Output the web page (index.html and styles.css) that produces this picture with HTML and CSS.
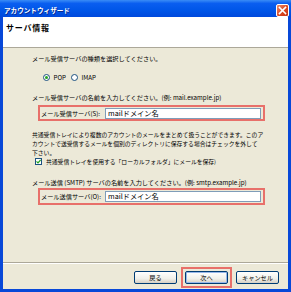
FILE: index.html
```html
<!DOCTYPE html>
<html>
<head>
    <title>アカウントウィザード</title>
    <link rel="stylesheet" href="styles.css">
</head>
<body>

<div class="window">
    <div class="titlebar">
        <span class="title">アカウントウィザード</span>
        <span class="close-btn">
            <svg width="9" height="9" viewBox="0 0 9 9">
                <path d="M1.5 1.5 L7.5 7.5 M7.5 1.5 L1.5 7.5" stroke="#fff" stroke-width="1.6" stroke-linecap="square"/>
            </svg>
        </span>
    </div>

    <div class="client">
        <!-- Page header -->
        <div class="header">サーバ情報</div>

        <div class="content">
            <div class="question first">メール受信サーバの種類を選択してください。</div>

            <div class="radios">
                <label class="opt"><span class="radio checked"></span>POP</label>
                <label class="opt"><span class="radio"></span>IMAP</label>
            </div>

            <div class="question second">メール受信サーバの名前を入力してください。(例: mail.example.jp)</div>
            <div class="field">
                <span class="field-label">メール受信サーバ(S):</span>
                <span class="text-input">mailドメイン名</span>
            </div>

            <p class="note">共通受信トレイにより複数のアカウントのメールをまとめて扱うことができます。このア<br>カウントで送受信するメールを個別のディレクトリに保存する場合はチェックを外して<br>下さい。</p>

            <label class="check-row"><span class="checkbox">
                <svg width="5" height="5" viewBox="0 0 5 5"><path d="M0.5 2.4 L2 3.9 L4.6 1" stroke="#21a121" stroke-width="1.2" fill="none"/></svg>
            </span>共通受信トレイを使用する「ローカルフォルダ」にメールを保存)</label>

            <div class="question third">メール送信 (SMTP) サーバの名前を入力してください。(例: smtp.example.jp)</div>
            <div class="field tall">
                <span class="field-label">メール送信サーバ(O):</span>
                <span class="text-input">mailドメイン名</span>
            </div>
        </div>

        <!-- Wizard buttons -->
        <div class="footer">
            <button class="btn">戻る</button>
            <span class="highlight"><button class="btn default">次へ</button></span>
            <button class="btn">キャンセル</button>
        </div>
    </div>
</div>

</body>
</html>
```

FILE: styles.css
```css
body {
    margin: 0;
    font-family: "Noto Sans CJK JP", "Noto Sans", sans-serif;
    font-size: 6.2px;
    color: #000;
}

.window {
    width: 291px;
    height: 292px;
    display: flex;
    flex-direction: column;
    background-color: #0848d8; /* blue frame */
}

.titlebar {
    height: 17px;
    flex-shrink: 0;
    display: flex;
    align-items: center;
    justify-content: space-between;
    padding: 3px 2px 0 4px;
    box-sizing: border-box;
    background: linear-gradient(#3a8cf6 0%, #0a5ef0 20%, #0056e8 60%, #0049dc 100%);
}

.title {
    color: #fff;
    font-weight: bold;
    font-size: 6.6px;
    text-shadow: 1px 1px 0 #0b2a8c;
}

.close-btn {
    width: 13px;
    height: 13px;
    box-sizing: border-box;
    border: 1px solid #fff;
    border-radius: 2px;
    background: linear-gradient(135deg, #ec8a6a, #d8431d 60%, #c4361a);
    display: flex;
    align-items: center;
    justify-content: center;
}

.client {
    flex: 1;
    margin: 0 3px 3px;
    display: flex;
    flex-direction: column;
    background-color: #ece9d8;
}

.header {
    height: 31px;
    box-sizing: border-box;
    padding: 6px 0 0 3px;
    line-height: 10px;
    background-color: #fff;
    border-bottom: 1px solid #aca899;
    font-weight: bold;
    font-size: 8px;
    letter-spacing: 0.8px;
}

.content {
    flex: 1;
    padding: 6px 0 0 29px;
    border-bottom: 1px solid #aca899;
}

.question {
    line-height: 10px;
    white-space: nowrap;
}

.second {
    margin-top: 12px;
}

.third {
    margin-top: 13px;
}

.radios {
    display: flex;
    height: 8px;
    align-items: center;
    gap: 5px;
    margin: 9px 0 0 11px;
}

.opt {
    display: flex;
    align-items: center;
    gap: 3.5px;
}

.radio {
    width: 7px;
    height: 7px;
    box-sizing: border-box;
    border: 1px solid #1c5180;
    border-radius: 50%;
    background-color: #fff;
    display: flex;
    align-items: center;
    justify-content: center;
}

.radio.checked::after {
    content: "";
    width: 3px;
    height: 3px;
    border-radius: 50%;
    background-color: #21a121;
}

.field {
    width: 227px;
    height: 16px;
    box-sizing: border-box;
    margin: 2px 0 0 6px;
    border: 2px solid #e8706a;
    display: flex;
    align-items: center;
    padding-left: 1px;
}

.field.tall {
    height: 17px;
    margin-top: 0;
}

.text-input {
    margin-left: auto;
    margin-right: 2px;
    width: 156px;
    height: 11px;
    box-sizing: border-box;
    border: 1px solid #7f9db9;
    background-color: #fff;
    line-height: 9px;
    padding-left: 2px;
    font-size: 7.2px;
}

.note {
    margin: 9px 0 0;
    line-height: 9px;
    white-space: nowrap;
    font-size: 5.8px;
}

.check-row {
    display: flex;
    align-items: center;
    gap: 4px;
    height: 8px;
    margin-left: 3px;
    font-size: 5.8px;
}

.checkbox {
    width: 7px;
    height: 7px;
    box-sizing: border-box;
    border: 1px solid #1c5180;
    background-color: #fff;
    display: flex;
    align-items: center;
    justify-content: center;
}

.footer {
    height: 26px;
    box-sizing: border-box;
    border-top: 1px solid #fff;
    display: flex;
    justify-content: flex-end;
    align-items: flex-start;
    gap: 8px;
    padding: 7px 9px 0 0;
}

.btn {
    width: 43px;
    height: 13px;
    padding: 0;
    font-family: inherit;
    font-size: 6.2px;
    color: #000;
    border: 1px solid #003c74;
    border-radius: 2px;
    background: linear-gradient(#ffffff, #f0f0ea 60%, #d6d0c5);
}

.btn.default {
    display: block;
    box-shadow: inset 0 0 0 1px #98b8ea;
}

/* red annotation box round the Next button */
.highlight {
    margin: -4px;
    padding: 2px;
    border: 2px solid #e8706a;
}
```
